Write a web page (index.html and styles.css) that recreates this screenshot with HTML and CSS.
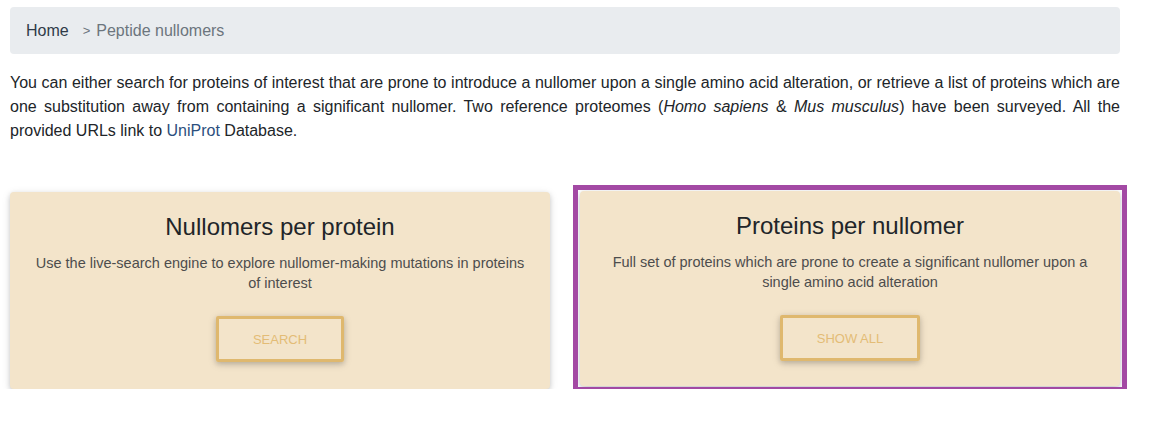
FILE: index.html
```html
<!DOCTYPE html>
<html lang="en">
<head>
<meta charset="utf-8">
<title>Peptide nullomers</title>
<link rel="stylesheet" href="styles.css">
</head>
<body>
<div class="page">
  <nav class="breadcrumb">
    <a class="crumb-home" href="#">Home</a>
    <span class="crumb-sep">&gt;</span>
    <span class="crumb-current">Peptide nullomers</span>
  </nav>
  <p class="intro">You can either search for proteins of interest that are prone to introduce a nullomer upon a single amino acid alteration, or retrieve a list of proteins which are one substitution away from containing a significant nullomer. Two reference proteomes (<i>Homo sapiens</i> &amp; <i>Mus musculus</i>) have been surveyed. All the provided URLs link to <a class="link" href="#">UniProt</a> Database.</p>
  <div class="cards">
    <div class="card">
      <h4 class="card-title">Nullomers per protein</h4>
      <p class="card-text">Use the live-search engine to explore nullomer-making mutations in proteins of interest</p>
      <a class="btn" href="#">SEARCH</a>
    </div>
    <div class="card card-highlight">
      <h4 class="card-title">Proteins per nullomer</h4>
      <p class="card-text">Full set of proteins which are prone to create a significant nullomer upon a single amino acid alteration</p>
      <a class="btn" href="#">SHOW ALL</a>
    </div>
  </div>
</div>
</body>
</html>
```
FILE: styles.css
```css
html, body {
  margin: 0;
  padding: 0;
  background: #ffffff;
}
body {
  font-family: "Liberation Sans", Arial, sans-serif;
  color: #212529;
  font-size: 16px;
}
.page {
  width: 1110px;
  padding-left: 10px;
  padding-top: 7px;
}
.breadcrumb {
  display: flex;
  align-items: center;
  height: 47px;
  padding: 0 16px;
  background: #e9ecef;
  border-radius: 4px;
  box-sizing: border-box;
  font-size: 16px;
}
.crumb-home {
  color: #2f3b48;
  text-decoration: none;
}
.crumb-sep {
  color: #6c757d;
  font-size: 13px;
  padding-left: 14px;
  padding-right: 6px;
}
.crumb-current {
  color: #6c757d;
}
.intro {
  margin: 17px 0 0 0;
  line-height: 24px;
  text-align: justify;
}
.link {
  color: #2c4f7e;
  text-decoration: none;
}
.cards {
  display: grid;
  grid-template-columns: 540px 540px;
  column-gap: 30px;
  margin-top: 49px;
}
.card {
  position: relative;
  background: #f3e4ca;
  border-radius: 4px;
  box-shadow: 0 2px 5px rgba(0,0,0,0.16), 0 2px 10px rgba(0,0,0,0.10);
  padding: 20px 20px 27px;
  text-align: center;
  height: 197px;
  box-sizing: border-box;
}
.card-highlight {
  margin-top: -1px;
  height: 195px;
}
.card-highlight::after {
  content: "";
  position: absolute;
  left: -7px;
  right: -7px;
  top: -6px;
  bottom: -6px;
  border: 5px solid #a349a4;
  pointer-events: none;
}
.card-title {
  margin: 0 0 12px;
  font-size: 24px;
  font-weight: 400;
  line-height: 29px;
  color: #212529;
}
.card-text {
  margin: 0;
  font-size: 14.5px;
  line-height: 20px;
  color: #4d4d4d;
}
.btn {
  display: inline-flex;
  align-items: center;
  justify-content: center;
  margin-top: 23px;
  height: 46px;
  box-sizing: border-box;
  padding: 0 34px;
  border: 3px solid #dfb86e;
  border-radius: 2px;
  background: transparent;
  color: #e3bc76;
  font-size: 13px;
  text-decoration: none;
  box-shadow: 0 2px 5px rgba(0,0,0,0.16), 0 2px 10px rgba(0,0,0,0.12);
}
```
